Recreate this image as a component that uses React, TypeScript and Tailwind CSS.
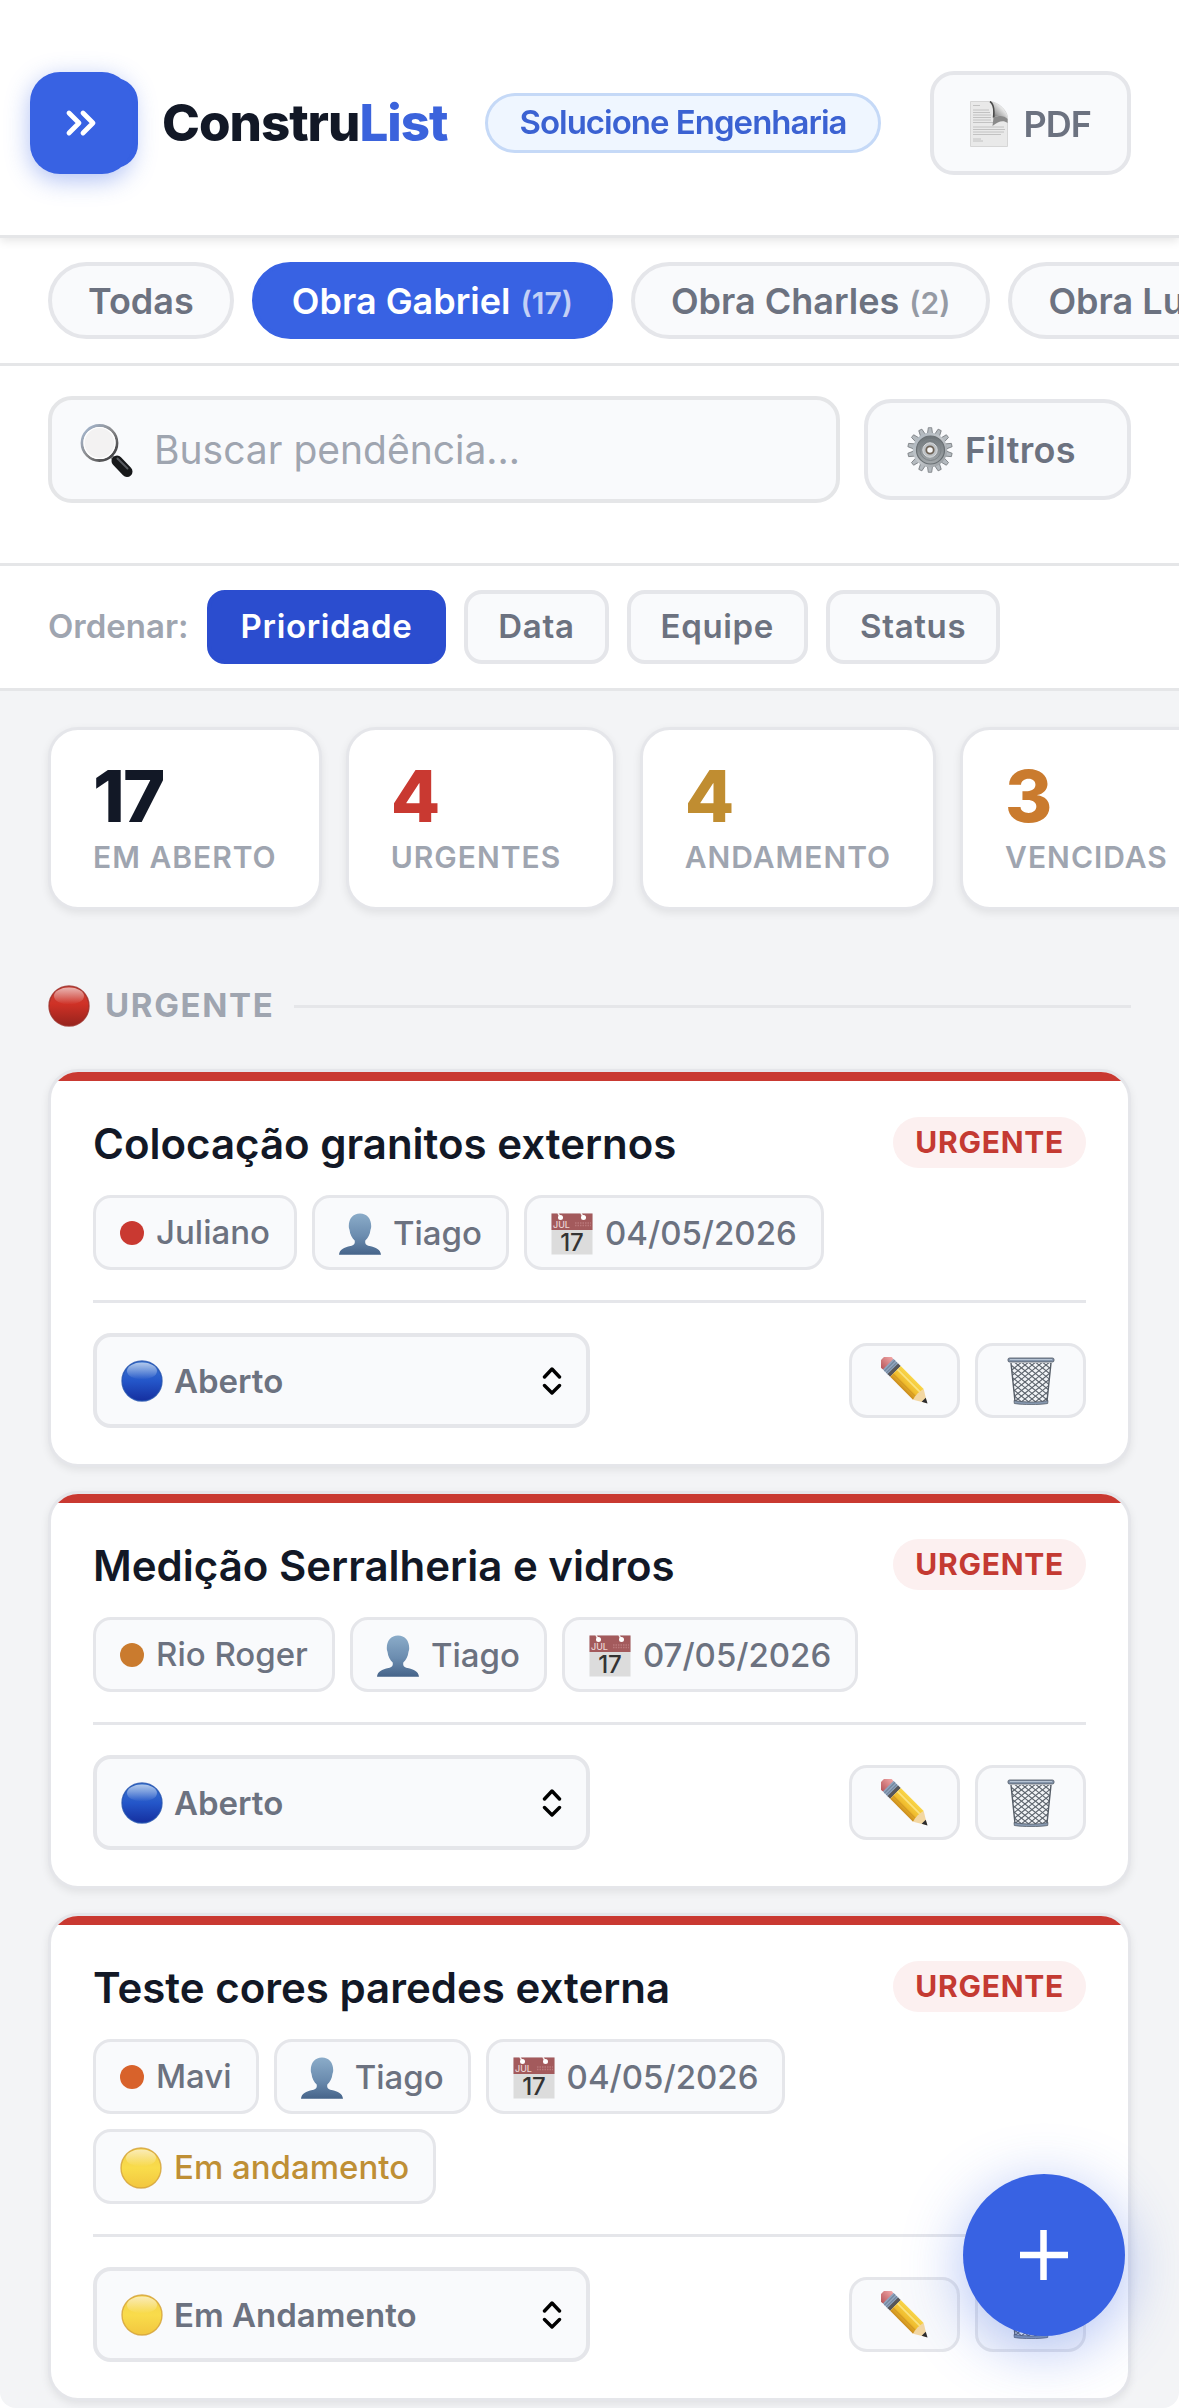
import { useState, type ReactNode } from "react";

/* Gradients, patterns and clips shared by every pictogram on the page. */
function SharedDefs() {
  return (
    <svg className="absolute size-0" aria-hidden="true">
      <defs>
        <linearGradient id="ballRed" x1="0" y1="0" x2="0" y2="1">
          <stop offset="0" stopColor="#c9453c" />
          <stop offset="0.45" stopColor="#cf3126" />
          <stop offset="1" stopColor="#96231d" />
        </linearGradient>
        <linearGradient id="ballBlue" x1="0" y1="0" x2="0" y2="1">
          <stop offset="0" stopColor="#3f78cf" />
          <stop offset="0.5" stopColor="#2456c9" />
          <stop offset="1" stopColor="#152f9f" />
        </linearGradient>
        <linearGradient id="ballYellow" x1="0" y1="0" x2="0" y2="1">
          <stop offset="0" stopColor="#f3cf4a" />
          <stop offset="0.5" stopColor="#f9dc4b" />
          <stop offset="1" stopColor="#f2c63f" />
        </linearGradient>
        <linearGradient id="gloss" x1="0" y1="0" x2="0" y2="1">
          <stop offset="0" stopColor="#fff" stopOpacity="0.6" />
          <stop offset="1" stopColor="#fff" stopOpacity="0" />
        </linearGradient>
        <linearGradient id="personFill" x1="0" y1="0" x2="0" y2="1">
          <stop offset="0" stopColor="#8bacc9" />
          <stop offset="0.55" stopColor="#6b8caf" />
          <stop offset="1" stopColor="#46648a" />
        </linearGradient>
        <linearGradient id="curl" x1="0" y1="1" x2="1" y2="0">
          <stop offset="0" stopColor="#3c3c3c" />
          <stop offset="0.35" stopColor="#a5a5a5" />
          <stop offset="0.7" stopColor="#f2f2f2" />
          <stop offset="1" stopColor="#cfcfcf" />
        </linearGradient>
        <linearGradient id="rim" x1="0" y1="0" x2="1" y2="1">
          <stop offset="0" stopColor="#a9bdd8" />
          <stop offset="0.5" stopColor="#8a8a8c" />
          <stop offset="1" stopColor="#2e2e30" />
        </linearGradient>
        <linearGradient id="gearFill" x1="0" y1="0" x2="1" y2="1">
          <stop offset="0" stopColor="#aab4bc" />
          <stop offset="0.5" stopColor="#c3c7cb" />
          <stop offset="1" stopColor="#8f9498" />
        </linearGradient>
        <linearGradient id="gearBowl" x1="0" y1="0" x2="0" y2="1">
          <stop offset="0" stopColor="#6d7478" />
          <stop offset="1" stopColor="#a4a9ac" />
        </linearGradient>
        <linearGradient id="pencilBody" x1="0" y1="0" x2="0" y2="1">
          <stop offset="0" stopColor="#f9d548" />
          <stop offset="0.6" stopColor="#f0bd2e" />
          <stop offset="1" stopColor="#c98a1c" />
        </linearGradient>
        <linearGradient id="eraser" x1="0" y1="0" x2="0" y2="1">
          <stop offset="0" stopColor="#f0a5a5" />
          <stop offset="1" stopColor="#b9595d" />
        </linearGradient>
        <clipPath id="basket">
          <path d="M4 6h40l-4 39H8z" />
        </clipPath>
      </defs>
    </svg>
  );
}

type BallColor = "red" | "blue" | "yellow";

const ballFill: Record<BallColor, [string, string]> = {
  red: ["url(#ballRed)", "#9b2a24"],
  blue: ["url(#ballBlue)", "#1f4fae"],
  yellow: ["url(#ballYellow)", "#d3a036"],
};

function Ball({ color, className = "" }: { color: BallColor; className?: string }) {
  const [fill, edge] = ballFill[color];
  return (
    <svg viewBox="0 0 42 42" className={`size-[42px] shrink-0 ${className}`} aria-hidden="true">
      <circle cx="21" cy="21" r="20" fill={fill} stroke={edge} strokeWidth="1.4" strokeOpacity="0.8" />
      <ellipse cx="21" cy="11" rx="15" ry="8.5" fill="url(#gloss)" />
    </svg>
  );
}

function PageIcon() {
  return (
    <svg viewBox="0 0 38 46" className="h-[46px] w-[38px] shrink-0" aria-hidden="true">
      <path d="M.5.5H20c9 1 17 9 17.500 16v29H.5z" fill="#e9e9e9" stroke="#d6d6d6" />
      <path
        d="M3 4.500h7M3 9h16M3 11.500h17M3 14h18M3 16.500h18M3 19h18M3 21.500h20M3 26h31M3 28.500h32M3 31h31M3 33.500h28M3 38h8M3 40h10"
        stroke="#bdbdbd"
        strokeWidth="0.900"
      />
      <path d="M20 .5c3 2 4.500 8 3.500 16 5-2 11-2.500 14 2C37 10 29 1.500 20 .5z" fill="url(#curl)" />
      <path d="M23.500 16.500c5-2 11-2.500 14 1.500v4c-4-3-9-2-15 3z" fill="#4b4b4b" opacity="0.600" />
      <path d="M20 .5c3 2 4.500 8 3.500 16" fill="none" stroke="#4a4a4a" strokeWidth="1.600" />
    </svg>
  );
}

function SearchIcon({ className = "" }: { className?: string }) {
  return (
    <svg viewBox="0 0 54 54" className={`size-[54px] ${className}`} aria-hidden="true">
      <path d="M31 33l5 5" stroke="#8b8b8d" strokeWidth="4" />
      <path d="M37 38l10 10.500" stroke="#17181a" strokeWidth="11" strokeLinecap="round" />
      <path d="M37.500 35.500l10 10" stroke="#5a5d61" strokeWidth="2" strokeLinecap="round" />
      <circle cx="19.500" cy="20" r="17.500" fill="#f3f2f2" stroke="url(#rim)" strokeWidth="2.800" />
      <circle cx="19.500" cy="20" r="15.500" fill="none" stroke="#fff" strokeWidth="1.200" />
    </svg>
  );
}

const gearTeeth = Array.from({ length: 14 }, (_, i) => (i * 360) / 14);

function GearIcon() {
  return (
    <svg viewBox="0 0 46 46" className="size-[46px] shrink-0" aria-hidden="true">
      {gearTeeth.map((angle) => (
        <path
          key={angle}
          d="M20.400 7l.9-6.300h3.400l.9 6.300z"
          fill="#b4babf"
          stroke="#777b7f"
          strokeWidth="0.800"
          transform={`rotate(${angle} 23 23)`}
        />
      ))}
      <circle cx="23" cy="23" r="17.300" fill="url(#gearFill)" />
      <circle cx="23.500" cy="23" r="14" fill="url(#gearBowl)" stroke="#6a7074" strokeWidth="1.200" />
      <circle cx="23.500" cy="23" r="10.500" fill="none" stroke="#7e8488" strokeWidth="1" />
      <circle cx="23" cy="23" r="7.200" fill="#bdc1c4" stroke="#d8dadc" strokeWidth="1" />
      <circle cx="23" cy="23" r="3.700" fill="#f6f7f8" stroke="#6e6357" strokeWidth="1.800" />
    </svg>
  );
}

function PersonIcon() {
  return (
    <svg viewBox="0 0 42 42" className="size-[42px] shrink-0" aria-hidden="true">
      <path
        d="M21 .5c7 0 11.200 5 11.200 12.500 0 1.500-.2 2.500-.7 3.800-.6 5.200-2.500 8.200-5.200 10.700-.5 3.500.7 4.800 4.200 5.500 6.500 1.300 11 3.500 11.500 8.700H0c.5-5.200 5-7.400 11.500-8.700 3.500-.7 4.700-2 4.200-5.500-2.700-2.500-4.600-5.500-5.200-10.700-.5-1.300-.7-2.300-.7-3.800C9.800 5.500 14 .5 21 .5z"
        fill="url(#personFill)"
      />
    </svg>
  );
}

function CalendarIcon() {
  return (
    <svg viewBox="0 0 42 42" className="size-[42px] shrink-0" aria-hidden="true">
      <rect x="0.500" y="0.500" width="41" height="41" fill="#dcdcdc" />
      <rect x="0.500" y="0.500" width="41" height="16.500" fill="#a35a5c" />
      <path d="M24 10h16M24 12.500h16" stroke="#b97779" strokeWidth="1.500" strokeDasharray="1.500 1" />
      <path d="M7 0l2 4M30 0l2 4" stroke="#f4eaea" strokeWidth="1.600" />
      <circle cx="9.500" cy="4.500" r="2.500" fill="#fff" />
      <circle cx="32.500" cy="4.500" r="2.500" fill="#fff" />
      <text x="2" y="14.500" fontSize="9" fill="#ecd5d5" fontFamily="Inter, sans-serif">JUL</text>
      <text x="21" y="37.500" fontSize="24" textAnchor="middle" fill="#333" fontFamily="Inter, sans-serif">17</text>
    </svg>
  );
}

function PencilIcon() {
  return (
    <svg viewBox="0 0 48 48" className="size-[48px]" aria-hidden="true">
      <g transform="translate(24 24) rotate(45) scale(1.08 1.16) translate(-24.500 -24)">
        <rect x="-5" y="17.500" width="11" height="13" rx="5" fill="url(#eraser)" />
        <rect x="2.500" y="17.500" width="7" height="13" fill="#8fa3bd" />
        <path d="M4.500 17.500v13M7 17.500v13" stroke="#6f8299" strokeWidth="0.900" />
        <rect x="8.500" y="17.500" width="3.500" height="13" fill="#56565a" />
        <path d="M12 17.500h30v13H12z" fill="url(#pencilBody)" />
        <path d="M12 21.500h30" stroke="#fbe37d" strokeWidth="1.500" />
        <path d="M12 27h30" stroke="#d49a22" strokeWidth="1" />
        <path d="M42 17.500l11.500 6.500L42 30.500c-1.500-4-1.500-9 0-13z" fill="#f3d7a2" />
        <path d="M49 21.500l5 2.500-5 2.500z" fill="#2c2c2e" />
      </g>
    </svg>
  );
}

const meshLines = Array.from({ length: 17 }, (_, i) => -36 + i * 7);

function TrashIcon() {
  return (
    <svg viewBox="0 0 48 48" className="size-[48px]" aria-hidden="true">
      <path d="M4 6h40l-4 39H8z" fill="#f1f3f6" />
      <g clipPath="url(#basket)" stroke="#5d646d" strokeWidth="1.100">
        {meshLines.map((x) => (
          <path key={x} d={`M${x} 4l52 42M${x} 46l52-42`} />
        ))}
      </g>
      <path d="M4 6l4 38.500M44 6l-4 38.500" stroke="#565d67" strokeWidth="1.400" />
      <path d="M7 43.500c10 2 24 2 34 0l-.3 3c-9 1.500-24 1.500-33.400 0z" fill="#8798af" stroke="#4b535f" strokeWidth="0.700" />
      <rect x="1" y="1" width="46" height="4" rx="1.600" fill="#8595ab" stroke="#4b535f" strokeWidth="0.800" />
      <path d="M3 2.500h42" stroke="#b7c4d4" strokeWidth="1" />
    </svg>
  );
}

function ChevronsRight() {
  return (
    <svg viewBox="0 0 24 24" className="size-[48px]" fill="none" stroke="#fff" strokeWidth="2.400" strokeLinecap="round" strokeLinejoin="round" aria-hidden="true">
      <path d="M6 7l5 5-5 5M13 7l5 5-5 5" />
    </svg>
  );
}

function SelectArrows() {
  return (
    <svg
      viewBox="0 0 20 28"
      className="pointer-events-none absolute top-1/2 right-7 h-7 w-5 -translate-y-1/2"
      fill="none"
      stroke="#000"
      strokeWidth="3.400"
      strokeLinecap="round"
      strokeLinejoin="round"
      aria-hidden="true"
    >
      <path d="M2.500 10l7.500-8 7.500 8M2.500 18.500l7.500 7.500 7.500-7.500" />
    </svg>
  );
}

const projects = [
  { name: "Todas" },
  { name: "Obra Gabriel", count: 17 },
  { name: "Obra Charles", count: 2 },
  { name: "Obra Lucas" },
];

const sortOptions = ["Prioridade", "Data", "Equipe", "Status"];

const stats = [
  { value: 17, label: "EM ABERTO", color: "text-[#121826]" },
  { value: 4, label: "URGENTES", color: "text-[#c93931]" },
  { value: 4, label: "ANDAMENTO", color: "text-[#c08d31]" },
  { value: 3, label: "VENCIDAS", color: "text-[#ca7b2e]" },
];

type Task = {
  title: string;
  team: string;
  dot: string;
  owner: string;
  date: string;
  status: "Aberto" | "Em Andamento";
};

const tasks: Task[] = [
  { title: "Colocação granitos externos", team: "Juliano", dot: "bg-[#c93931]", owner: "Tiago", date: "04/05/2026", status: "Aberto" },
  { title: "Medição Serralheria e vidros", team: "Rio Roger", dot: "bg-[#ca7b2e]", owner: "Tiago", date: "07/05/2026", status: "Aberto" },
  { title: "Teste cores paredes externa", team: "Mavi", dot: "bg-[#d8622b]", owner: "Tiago", date: "04/05/2026", status: "Em Andamento" },
];

function Chip({ children, className = "text-[#6c7280]" }: { children: ReactNode; className?: string }) {
  return (
    <span className={`flex h-[75px] items-center gap-3 rounded-[18px] border-3 border-[#e5e6ea] bg-[#f9fafc] px-6 text-[33px] font-medium whitespace-nowrap ${className}`}>
      {children}
    </span>
  );
}

function IconButton({ label, children }: { label: string; children: ReactNode }) {
  return (
    <button type="button" aria-label={label} className="flex h-[75px] w-[111px] items-center justify-center rounded-[18px] border-3 border-[#e5e6ea] bg-[#f9fafc]">
      {children}
    </button>
  );
}

function TaskCard({ task }: { task: Task }) {
  const [status, setStatus] = useState<string>(task.status);
  return (
    <article className="overflow-hidden rounded-[30px] border-3 border-[#e5e6ea] bg-white shadow-[0_3px_9px_rgba(0,0,0,0.08)]">
      <div className="h-[9px] bg-[#c93931]" />
      <div className="px-[42px] pt-[33px] pb-9">
        <div className="flex items-start justify-between gap-6">
          <h3 className="text-[42px] leading-[59px] font-semibold text-[#121826]">{task.title}</h3>
          <span className="mt-[3px] flex h-[51px] items-center rounded-full bg-[#fcf0f0] px-[22px] text-[30px] font-bold tracking-wide text-[#c43a32]">
            URGENTE
          </span>
        </div>
        <div className="mt-[22px] flex flex-wrap gap-[15px]">
          <Chip>
            <span className={`size-6 rounded-full ${task.dot}`} />
            {task.team}
          </Chip>
          <Chip className="pt-[3px] text-[#6c7280]">
            <PersonIcon />
            {task.owner}
          </Chip>
          <Chip className="pt-[3px] text-[#6c7280]">
            <CalendarIcon />
            {task.date}
          </Chip>
          {task.status === "Em Andamento" && (
            <Chip className="pt-[3px] text-[#bf8f35]">
              <Ball color="yellow" />
              Em andamento
            </Chip>
          )}
        </div>
        <div className="mt-[30px] flex items-center justify-between border-t-3 border-[#e5e6ea] pt-[30px]">
          <div className="relative w-1/2">
            <Ball color={status === "Aberto" ? "blue" : "yellow"} className="pointer-events-none absolute top-1/2 left-7 -translate-y-1/2" />
            <select
              aria-label={`Status de ${task.title}`}
              value={status}
              onChange={(event) => setStatus(event.target.value)}
              className="h-[95px] w-full appearance-none rounded-[18px] border-4 border-[#e5e6ea] bg-[#f9fafc] pt-[3px] pr-16 pl-[77px] text-[33px] font-semibold text-[#6c7280]"
            >
              <option>Aberto</option>
              <option>Em Andamento</option>
            </select>
            <SelectArrows />
          </div>
          <div className="flex gap-[15px]">
            <IconButton label="Editar">
              <PencilIcon />
            </IconButton>
            <IconButton label="Excluir">
              <TrashIcon />
            </IconButton>
          </div>
        </div>
      </div>
    </article>
  );
}

export default function App() {
  const [project, setProject] = useState("Obra Gabriel");
  const [sort, setSort] = useState("Prioridade");

  return (
    <div className="min-h-screen overflow-x-hidden rounded-b-2xl bg-[#f3f4f6] font-['Inter',sans-serif] text-[#121826]">
      <SharedDefs />

      <header className="relative z-10 flex items-center border-b-3 border-[#e5e6e8] bg-white px-12 pt-[71px] pb-[60px] shadow-[0_3px_9px_rgba(0,0,0,0.1)]">
        <div className="relative size-[90px] shrink-0 rounded-3xl bg-[#3862e3]">
          <button
            type="button"
            aria-label="Abrir menu"
            className="absolute -top-1.5 -left-[18px] flex size-[102px] items-center justify-center rounded-[30px] bg-[#3862e3] shadow-[0_6px_24px_rgba(56,98,227,0.4)]"
          >
            <ChevronsRight />
          </button>
        </div>
        <h1 className="ml-6 text-[51px] leading-[60px] font-extrabold tracking-[-1px]">
          Constru<span className="text-[#3b63dc]">List</span>
        </h1>
        <span className="ml-[38px] flex h-[60px] items-center rounded-full border-3 border-[#c5d9f7] bg-[#eff6ff] px-[31px] text-[33px] font-semibold tracking-[-1px] whitespace-nowrap text-[#3b62d2]">
          Solucione Engenharia
        </span>
        <button type="button" className="ml-auto flex h-[104px] items-center gap-4 rounded-3xl border-4 border-[#e5e6ea] bg-[#f9fafc] px-9 pt-0.5 text-[36px] font-semibold tracking-[-1px] text-[#6c7280]">
          <PageIcon />
          PDF
        </button>
      </header>

      <nav className="flex gap-[18px] overflow-x-auto border-b-3 border-[#e5e6e8] bg-white px-12 py-6 [scrollbar-width:none]">
        {projects.map(({ name, count }) => (
          <button
            key={name}
            type="button"
            onClick={() => setProject(name)}
            className={`h-[77px] shrink-0 rounded-full border-4 px-9 text-[36px] font-semibold whitespace-nowrap ${
              project === name ? "border-[#3862e3] bg-[#3862e3] text-white" : "border-[#e5e6ea] bg-[#f9fafc] text-[#6c7280]"
            }`}
          >
            {name}
            {count !== undefined && <span className="ml-2.5 text-[30px] opacity-70">({count})</span>}
          </button>
        ))}
      </nav>

      <section className="flex items-center gap-6 border-b-3 border-[#e5e6e8] bg-white px-12 pt-[30px] pb-[60px]">
        <label className="relative flex-1">
          <SearchIcon className="pointer-events-none absolute top-1/2 left-8 -translate-y-1/2" />
          <input
            type="text"
            aria-label="Buscar pendência"
            placeholder="Buscar pendência..."
            className="h-[107px] w-full rounded-3xl border-4 border-[#e5e6e8] bg-[#f9fafc] pr-6 pl-[102px] text-[39px] placeholder:text-[#9fa5b0]"
          />
        </label>
        <button type="button" className="flex h-[101px] items-center gap-3 rounded-[27px] border-4 border-[#e5e6ea] bg-[#f9fafc] pr-[51px] pl-[39px] text-[36px] font-semibold tracking-[0.01em] text-[#6c7280]">
          <GearIcon />
          Filtros
        </button>
      </section>

      <section className="flex items-center gap-[18px] border-b-3 border-[#e5e6e8] bg-white px-12 py-6">
        <span className="text-[33px] font-semibold text-[#9fa5b0]">Ordenar:</span>
        {sortOptions.map((option) => (
          <button
            key={option}
            type="button"
            onClick={() => setSort(option)}
            className={`h-[74px] rounded-[18px] border-4 px-[30px] text-[33px] font-semibold tracking-[0.02em] ${
              sort === option ? "border-[#2b4dcf] bg-[#2b4dcf] text-white" : "border-[#e5e6ea] bg-[#f9fafc] text-[#6c7280]"
            }`}
          >
            {option}
          </button>
        ))}
      </section>

      <main>
        <section className="flex gap-6 overflow-x-auto px-12 py-9 [scrollbar-width:none]">
          {stats.map(({ value, label, color }) => (
            <div key={label} className="min-w-[270px] shrink-0 rounded-[30px] border-3 border-[#e5e6ea] bg-white px-[42px] py-[30px] shadow-[0_3px_9px_rgba(0,0,0,0.08)]">
              <div className={`text-[72px] leading-[72px] font-extrabold tracking-tight ${color}`}>{value}</div>
              <div className="mt-1.5 text-[30px] leading-[39px] font-semibold tracking-[1px] whitespace-nowrap text-[#9fa5b0]">{label}</div>
            </div>
          ))}
        </section>

        <section className="px-12">
          <h2 className="mt-[36px] flex h-[48px] items-center text-[33px] font-bold tracking-wider text-[#9fa5b0]">
            <Ball color="red" />
            <span className="ml-[15px]">URGENTE</span>
            <span className="ml-5 h-[3px] flex-1 bg-[#e5e6e9]" />
          </h2>
          <div className="mt-[39px] flex flex-col gap-6">
            {tasks.map((task) => (
              <TaskCard key={task.title} task={task} />
            ))}
          </div>
        </section>
      </main>

      <button
        type="button"
        aria-label="Nova pendência"
        className="fixed right-[54px] bottom-[72px] z-20 flex size-[162px] items-center justify-center rounded-full bg-[#3862e3] shadow-[0_12px_60px_rgba(56,98,227,0.4)]"
      >
        <svg viewBox="0 0 50 50" className="size-[50px]" stroke="#fff" strokeWidth="6.500" aria-hidden="true">
          <path d="M24.500 0v50M1 25h48" />
        </svg>
      </button>
    </div>
  );
}
